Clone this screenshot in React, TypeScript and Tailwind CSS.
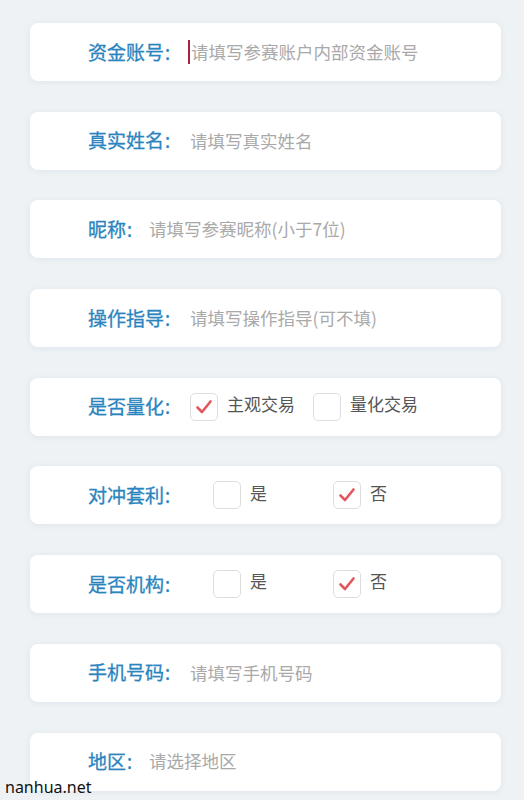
import React from 'react';

const font = { fontFamily: '"Noto Sans CJK SC", "Noto Sans", sans-serif' };

function Card({ children }: { children: React.ReactNode }) {
	return (
		<div className="ml-[30px] mr-[23px] flex h-[58px] items-center rounded-[8px] bg-white pl-[58px] shadow-[0_1px_6px_rgba(150,170,190,0.18)]">
			{children}
		</div>
	);
}

function Label({ text }: { text: string }) {
	return (
		<span className="text-[19px] leading-none text-[#2a84be] [-webkit-text-stroke:0.3px_#2a84be]">
			{text}
			<span className="ml-[1px] font-sans">:</span>
		</span>
	);
}

function Box({ checked }: { checked: boolean }) {
	return (
		<span className="flex h-[28px] w-[28px] items-center justify-center rounded-[5px] border border-[#dedede] bg-white">
			{checked && (
				<svg width="18" height="18" viewBox="0 0 18 18" fill="none">
					<path d="M2.5 9.5 L7 14 L15.5 3.5" stroke="#e2575c" strokeWidth="2.6" strokeLinecap="round" strokeLinejoin="round" />
				</svg>
			)}
		</span>
	);
}

function Option({ label, checked, width }: { label: string; checked: boolean; width?: string }) {
	return (
		<span className={`flex items-center ${width ?? ''}`}>
			<Box checked={checked} />
			<span className="ml-[9px] -mt-[6px] text-[17px] text-[#555]">{label}</span>
		</span>
	);
}

function InputRow({ label, placeholder, gap, cursor }: { label: string; placeholder: string; gap: string; cursor?: boolean }) {
	return (
		<Card>
			<Label text={label} />
			<span className={`flex items-center ${gap}`}>
				{cursor && <span className="mr-[1px] h-[24px] w-[2px] bg-[#a4243b]" />}
				<span className="text-[17.5px] text-[#a9a9a9]">{placeholder}</span>
			</span>
		</Card>
	);
}

export default function App() {
	return (
		<div className="relative h-[800px] overflow-hidden bg-[#eef2f5] pt-[23px]" style={font}>
			<div className="flex flex-col gap-[30.7px]">
				<InputRow label="资金账号" placeholder="请填写参赛账户内部资金账号" gap="ml-[18px]" cursor />
				<InputRow label="真实姓名" placeholder="请填写真实姓名" gap="ml-[20px]" />
				<InputRow label="昵称" placeholder="请填写参赛昵称(小于7位)" gap="ml-[17px]" />
				<InputRow label="操作指导" placeholder="请填写操作指导(可不填)" gap="ml-[20px]" />
				<Card>
					<Label text="是否量化" />
					<span className="ml-[20px] flex items-center gap-[18px]">
						<Option label="主观交易" checked />
						<Option label="量化交易" checked={false} />
					</span>
				</Card>
				<Card>
					<Label text="对冲套利" />
					<span className="ml-[43px] flex items-center">
						<Option label="是" checked={false} width="w-[120px]" />
						<Option label="否" checked />
					</span>
				</Card>
				<Card>
					<Label text="是否机构" />
					<span className="ml-[43px] flex items-center">
						<Option label="是" checked={false} width="w-[120px]" />
						<Option label="否" checked />
					</span>
				</Card>
				<InputRow label="手机号码" placeholder="请填写手机号码" gap="ml-[20px]" />
				<InputRow label="地区" placeholder="请选择地区" gap="ml-[17px]" />
			</div>
			<span
				className="absolute bottom-[1px] left-[5px] text-[16px] text-[#111]"
				style={{ fontFamily: '"Noto Sans", sans-serif' }}
			>
				nanhua.net
			</span>
		</div>
	);
}
